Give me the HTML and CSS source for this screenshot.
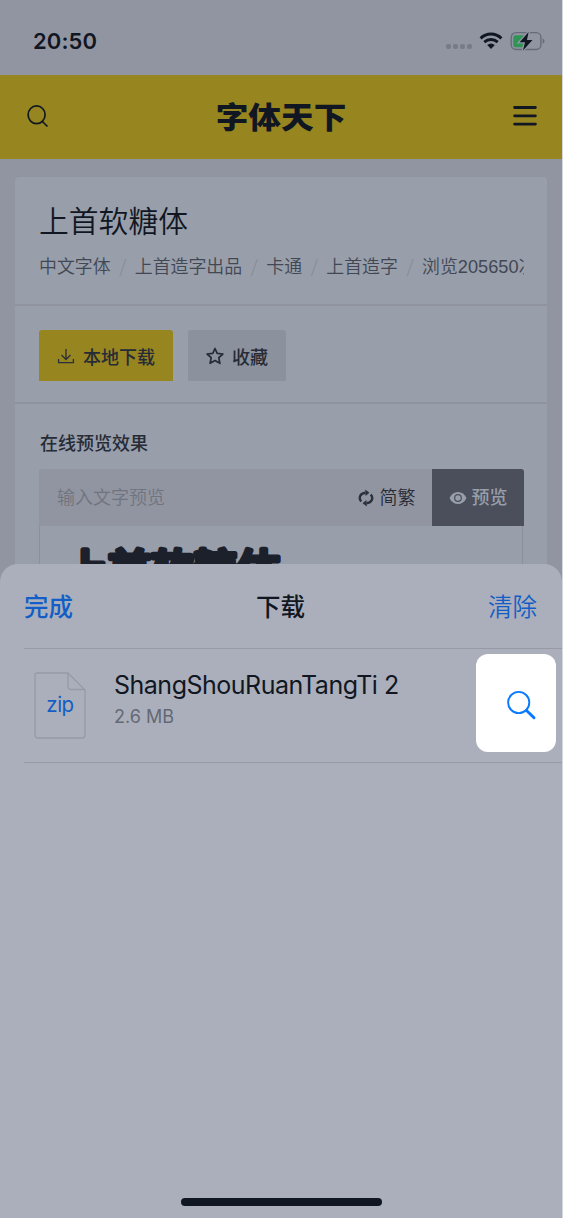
FILE: index.html
```html
<!DOCTYPE html>
<html lang="zh-CN">
<head>
<meta charset="utf-8">
<title>上首软糖体</title>
<link rel="stylesheet" href="styles.css">
</head>
<body>
<div class="screen">
  <div class="status">
    <span class="time">20:50</span>
    <div class="status-icons">
      <span class="dots"><i></i><i></i><i></i><i></i></span>
      <svg class="wifi" width="24" height="18" viewBox="0 0 24 18">
        <g fill="none" stroke="#111722" stroke-width="3"><path d="M1.600 6.300C7.600 .7 16.400 .7 22.400 6.300"/><path d="M5.300 10.200C9.200 6.600 14.800 6.600 18.700 10.200"/></g>
        <path d="M8.200 13.100Q12 10 15.800 13.100L12 17Z" fill="#111722"/>
      </svg>
      <svg class="battery" width="34" height="20" viewBox="0 0 34 20">
        <rect x="1" y="1.600" width="28.300" height="16" rx="4.500" fill="none" stroke="#666b77" stroke-width="1.300"/>
        <path d="M5 4h9v11.500H5Q3 15.500 3 13.500V6Q3 4 5 4Z" fill="#2f9556"/>
        <path d="M31 7.200Q32.700 8 32.700 9.700T31 12.200Z" fill="#666b77"/>
        <path d="M17.600 1L9 10.700H14.200L12.200 18.500L21.300 8.600H16Z" fill="#111722" stroke="#9195a1" stroke-width="2.600" paint-order="stroke"/>
      </svg>
    </div>
  </div>
  <header class="site-header">
    <svg class="search" width="24" height="24" viewBox="0 0 24 24" fill="none" stroke="#111722" stroke-width="1.700"><ellipse cx="10.600" cy="10.800" rx="8.500" ry="8.900"/><path d="M15.800 17L21.500 22.500"/></svg>
    <div class="logo">字体天下</div>
    <svg class="menu" width="24" height="22" viewBox="0 0 24 22" stroke="#111722" stroke-width="2.800" stroke-linecap="round"><path d="M1.600 2.500H22.400M1.600 10.800H22.400M1.600 19.100H22.400"/></svg>
  </header>
  <main class="content">
    <article class="card">
      <section class="intro">
        <h1>上首软糖体</h1>
        <div class="meta"><span>中文字体</span><b>/</b><span>上首造字出品</span><b>/</b><span>卡通</span><b>/</b><span>上首造字</span><b>/</b><span>浏览<em>205650</em>次</span></div>
      </section>
      <section class="actions">
        <div class="btn primary">
          <svg width="18" height="18" viewBox="0 0 18 18" fill="none" stroke="#2b2f38" stroke-width="1.300"><path d="M9 2v10.500M4.500 8L9 12.500L13.500 8M1.600 12v3.600H16.400V12"/></svg>
          <span>本地下载</span>
        </div>
        <div class="btn">
          <svg width="18" height="18" viewBox="0 0 18 18" fill="none" stroke="#262b36" stroke-width="1.700" stroke-linejoin="round"><path d="M9 1.500L11.200 6.300L16.900 7L12.800 10.700L13.900 16.300L9 13.500L4.100 16.300L5.200 10.700L1.100 7L6.800 6.300Z"/></svg>
          <span>收藏</span>
        </div>
      </section>
      <section class="preview">
        <h2>在线预览效果</h2>
        <div class="input">
          <span class="placeholder">输入文字预览</span>
          <svg width="16" height="18" viewBox="0 0 16 18"><g fill="none" stroke="#2b303b" stroke-width="2.400"><path d="M3.200 12.600C.3 8.800 2 4.200 7.500 3.700"/><path d="M12.800 5.400C15.700 9.200 14 13.800 8.500 14.300"/></g><path d="M7.200 .6L11.400 3.700L7.600 7ZM8.800 17.400L4.600 14.300L8.400 11Z" fill="#2b303b"/></svg>
          <span class="convert">简繁</span>
          <div class="view">
            <svg width="18" height="14" viewBox="0 0 18 14"><path d="M.5 7C4-1 14-1 17.500 7C14 15 4 15 .5 7Z" fill="#989eaa"/><circle cx="9" cy="7" r="3.300" fill="#989eaa" stroke="#4a4f5b" stroke-width="1.200"/></svg>
            <span>预览</span>
          </div>
        </div>
        <div class="sample"><svg width="260" height="70"><text x="25" y="60">上首软糖体</text></svg></div>
      </section>
    </article>
  </main>
  <section class="sheet">
    <div class="sheet-head">
      <span class="done">完成</span>
      <span class="title">下载</span>
      <span class="clear">清除</span>
    </div>
    <div class="row">
      <div class="file">
        <svg width="52" height="67" viewBox="0 0 52 67" fill="none" stroke="#969aa6" stroke-width="1.300"><path d="M3 1H34L51 18V63Q51 66 48 66H4Q1 66 1 63V3Q1 1 3 1ZM34 1V14Q34 17.500 37.500 17.500H51"/></svg>
        <span>zip</span>
      </div>
      <div class="info"><div class="name">ShangShouRuanTangTi 2</div><div class="size">2.6 MB</div></div>
      <div class="find">
        <svg width="32" height="32" viewBox="0 0 32 32" fill="none" stroke="#087aff"><circle cx="13.700" cy="13.500" r="10.600" stroke-width="1.900"/><path d="M21.500 21.500L29 28.800" stroke-width="2.900" stroke-linecap="round"/></svg>
      </div>
    </div>
    <div class="home"></div>
  </section>
</div>
</body>
</html>
```
FILE: styles.css
```css
* { box-sizing: border-box; }
body { margin: 0; background: #d5d7de; font-family: "Liberation Sans", "Noto Sans CJK SC", sans-serif; color: #111722; white-space: nowrap; }
h1, h2 { margin: 0; }
svg { display: block; flex: none; }
.screen { width: 562px; height: 1218px; background: #9195a1; overflow: hidden; display: flex; flex-direction: column; }
.status { height: 75px; flex: none; display: flex; justify-content: space-between; padding: 26px 16px 0 33px; }
.time { font: 600 22px/30px Inter, sans-serif; letter-spacing: .1px; }
.status-icons { display: flex; height: 30px; align-items: center; }
.dots { display: flex; gap: 2px; margin: 11px 7px 0 0; }
.dots i { width: 5px; height: 5px; border-radius: 2px; background: #777b87; }
.battery { margin-left: 7px; width: 36px; height: 21px; }
.site-header { height: 84px; flex: none; background: #978520; display: flex; align-items: center; justify-content: space-between; padding: 0 25px 2px 26px; }
.logo { font: 900 32px/40px "Noto Sans CJK SC", sans-serif; height: 42px; transform: scale(1.02, .93); }
.content { height: 431px; flex: none; padding: 18px 15px 0; overflow: hidden; }
.card { background: #989eaa; height: 460px; border-radius: 4px; }
.intro { height: 129px; padding: 20px 24px 0; border-bottom: 2px solid #8f939f; }
h1 { font: 350 29.800px/44px "Noto Sans CJK SC", sans-serif; }
.meta { display: flex; width: 485px; overflow: hidden; font: 350 17.900px/28px "Noto Sans CJK SC", sans-serif; color: #424853; margin-top: 10px; }
.meta b { width: 24.200px; flex: none; text-align: center; font-weight: 300; color: #858a96; }
.meta span { flex: none; }
.meta em { font: 18.200px "Liberation Sans", sans-serif; }
.actions { display: flex; gap: 15px; height: 98px; padding: 24px 24px 0; border-bottom: 2px solid #8f939f; }
.btn { height: 51px; width: 98px; background: #8b919d; border-radius: 3px 3px 0 0; display: flex; align-items: center; gap: 8px; padding-left: 18px; font: 500 18px/28px "Noto Sans CJK SC", sans-serif; color: #262b36; }
.btn.primary { width: 134px; background: #978520; }
.preview { padding: 24px 24px 0; }
h2 { font: 500 18px/28px "Noto Sans CJK SC", sans-serif; color: #262b36; padding-left: 1px; }
.input { margin-top: 13px; width: 484.500px; height: 57px; background: #9195a1; display: flex; align-items: center; padding-left: 18px; border-radius: 3px 3px 0 0; font: 350 18px/28px "Noto Sans CJK SC", sans-serif; color: #262b36; overflow: hidden; }
.input span { margin-top: -3px; }
.placeholder { color: #70747f; flex: 1; }
.input .convert { margin: -3px 16px 0 6px; }
.view { width: 92px; height: 57px; background: #4a4f5b; color: #989eaa; display: flex; align-items: center; gap: 5px; padding-left: 17px; font-weight: 500; }
.sample { height: 80px; width: 484px; border: solid #8b909c; border-width: 0 1px; }
.sample text { font: 500 43px "Noto Sans CJK SC", sans-serif; fill: #1c202b; stroke: #1c202b; stroke-width: 5px; stroke-linejoin: round; }
.sheet { flex: 1; margin-top: -26px; position: relative; background: #abafbb; border-radius: 18px 18px 0 0; display: flex; flex-direction: column; }
.sheet-head { height: 85px; margin-left: 24px; padding-right: 25px; border-bottom: 1px solid #959aa6; display: grid; grid-template-columns: 1fr auto 1fr; align-items: center; font: 350 24.500px/36px "Noto Sans CJK SC", sans-serif; color: #125ec6; }
.done, .title { font-weight: 500; }
.title { color: #111722; }
.clear { text-align: right; }
.row { height: 114px; margin-left: 24px; padding: 5px 6px 0 10px; border-bottom: 1px solid #959aa6; display: flex; }
.file { width: 52px; height: 67px; margin-top: 18px; display: grid; }
.file > * { grid-area: 1 / 1; }
.file span { font: 400 20.500px/28px Inter, sans-serif; color: #125ec6; text-align: center; margin-top: 19px; letter-spacing: -.5px; }
.info { margin: 14px 0 0 28px; flex: 1; font-family: Inter, sans-serif; }
.name { font-size: 25px; line-height: 34px; letter-spacing: -.5px; }
.size { font-size: 18px; line-height: 30px; color: #646975; }
.find { width: 80px; height: 98px; border-radius: 12px; background: #fff; padding: 35px 0 0 29px; }
.home { width: 201px; height: 8px; border-radius: 4px; background: #111722; margin: auto auto 12px 181px; }
```
